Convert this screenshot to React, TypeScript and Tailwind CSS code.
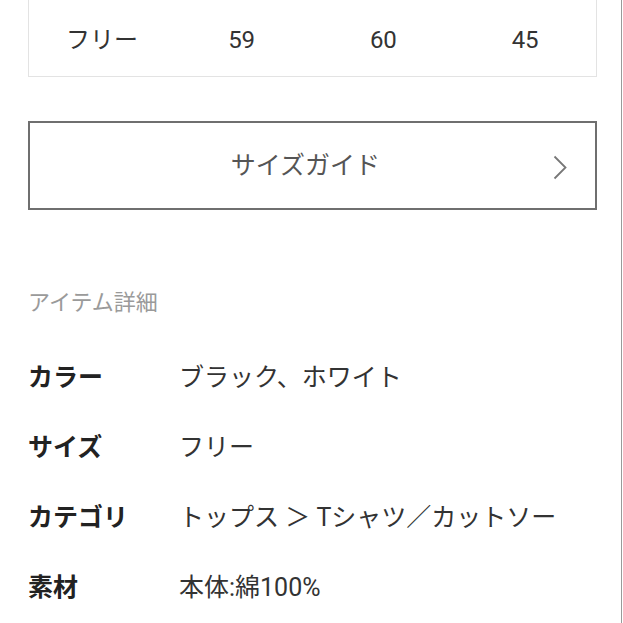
import React from 'react';

const font = { fontFamily: '"Roboto", "Noto Sans CJK JP", sans-serif' };

const sizes = [{ name: 'フリー', a: '59', b: '60', c: '45' }];

const details = [
  { label: 'カラー', value: 'ブラック、ホワイト' },
  { label: 'サイズ', value: 'フリー' },
  { label: 'カテゴリ', value: 'トップス ＞ Tシャツ／カットソー' },
  { label: '素材', value: '本体:綿100%' },
];

const Chevron = () => (
  <svg width="14" height="25" viewBox="0 0 14 25" fill="none" className="text-[#777]">
    <path d="M1.5 1.5 L12.5 12.5 L1.5 23.5" stroke="currentColor" strokeWidth="1.8" />
  </svg>
);

const App = () => {
  return (
    <div
      className="w-[622px] h-[623px] overflow-hidden bg-white border-r border-[#9a9a9a]"
      style={font}
    >
      <div className="ml-[28px] w-[569px]">
        {/* size table, top cut off */}
        {sizes.map((s) => (
          <div
            key={s.name}
            className="h-[77px] border border-t-0 border-[#e3e3e3] grid grid-cols-4 items-center text-[24px] text-[#333] pt-[4px]"
          >
            <span className="pl-[37px]">{s.name}</span>
            <span className="text-center">{s.a}</span>
            <span className="text-center">{s.b}</span>
            <span className="text-center">{s.c}</span>
          </div>
        ))}

        <button className="mt-[44px] w-full h-[89px] border-2 border-[#6f6f6f] flex items-center relative">
          <span className="flex-1 text-center text-[25px] text-[#555] pr-[14px]">サイズガイド</span>
          <span className="absolute right-[28px] top-[32px]">
            <Chevron />
          </span>
        </button>

        <div className="mt-[78px] h-[30px] leading-[30px] text-[22px] text-[#9a9a9a]">アイテム詳細</div>

        <div className="mt-[25px]">
          {details.map((d) => (
            <div key={d.label} className="h-[70px] flex items-center text-[25px]">
              <span className="w-[151px] font-bold text-[#222]">{d.label}</span>
              <span className="text-[#333]">{d.value}</span>
            </div>
          ))}
        </div>
      </div>
    </div>
  );
};

export default App;
